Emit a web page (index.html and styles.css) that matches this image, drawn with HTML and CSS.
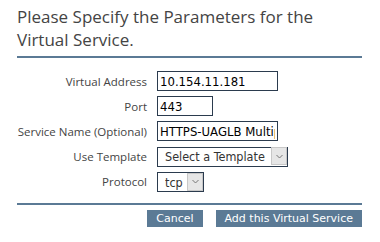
FILE: index.html
```html
<!DOCTYPE html>
<html lang="en">
<head>
    <meta charset="UTF-8">
    <title>Add Virtual Service</title>
    <link rel="stylesheet" href="styles.css">
</head>
<body>
    <div class="panel">
        <h1 class="title">Please Specify the Parameters for the Virtual Service.</h1>

        <div class="form">
            <label class="label" for="vip">Virtual Address</label>
            <input class="field field-wide" id="vip" type="text" value="10.154.11.181">

            <label class="label" for="port">Port</label>
            <input class="field field-port" id="port" type="text" value="443">

            <label class="label" for="name">Service Name (Optional)</label>
            <input class="field field-wide" id="name" type="text" value="HTTPS-UAGLB Multiple">

            <label class="label" for="tpl">Use Template</label>
            <div class="select-wrap">
                <select class="select select-template" id="tpl">
                    <option>Select a Template</option>
                </select>
                <span class="select-arrow">
                    <svg width="7" height="5" viewBox="0 0 7 5"><path d="M0.5 1 L3.5 4 L6.5 1" fill="none" stroke="#777" stroke-width="1"/></svg>
                </span>
            </div>

            <label class="label" for="proto">Protocol</label>
            <div class="select-wrap">
                <select class="select select-proto" id="proto">
                    <option>tcp</option>
                    <option>udp</option>
                </select>
                <span class="select-arrow">
                    <svg width="7" height="5" viewBox="0 0 7 5"><path d="M0.5 1 L3.5 4 L6.5 1" fill="none" stroke="#777" stroke-width="1"/></svg>
                </span>
            </div>
        </div>

        <div class="actions">
            <button class="btn">Cancel</button>
            <button class="btn">Add this Virtual Service</button>
        </div>
    </div>
</body>
</html>
```

FILE: styles.css
```css
body {
    margin: 0;
    background-color: white;
    font-family: "DejaVu Sans", Verdana, sans-serif;
}
.panel {
    padding: 5px 18px 0 17px;
}
.title {
    font-family: "Open Sans", sans-serif;
    font-size: 17px;
    font-weight: normal;
    line-height: 23px;
    color: #444;
    margin: 0;
    padding-bottom: 5px;
    border-bottom: 2px solid #5b7a95;
}
.form {
    display: grid;
    grid-template-columns: 130px auto;
    column-gap: 10px;
    row-gap: 5px;
    align-items: center;
    justify-items: start;
    padding: 13px 0 11px;
    border-bottom: 2px solid #5b7a95;
}
.label {
    justify-self: end;
    white-space: nowrap;
    font-family: "Open Sans", sans-serif;
    font-size: 11.5px;
    color: #444;
}
.field {
    box-sizing: border-box;
    height: 20px;
    border: 1px solid #2b3b4e;
    padding: 0 2px;
    font-family: "DejaVu Sans Condensed", "DejaVu Sans", sans-serif;
    font-size: 13px;
    color: black;
    outline: none;
}
.field-wide {
    width: 121px;
}
.field-port {
    width: 56px;
}
.select-wrap {
    position: relative;
    display: inline-block;
}
.select {
    box-sizing: border-box;
    height: 20px;
    -webkit-appearance: none;
    appearance: none;
    border: 1px solid #2b3b4e;
    border-radius: 0;
    background: white;
    padding: 0 0 0 7px;
    font-family: "DejaVu Sans Condensed", "DejaVu Sans", sans-serif;
    font-size: 12.5px;
    color: #333;
}
.select-template {
    width: 131px;
}
.select-proto {
    width: 47px;
}
.select-arrow {
    position: absolute;
    top: 1px;
    right: 1px;
    width: 16px;
    height: 18px;
    background: #e6e6e6;
    border: 1px solid #c8c8c8;
    box-sizing: border-box;
    display: flex;
    align-items: center;
    justify-content: center;
}
.actions {
    display: flex;
    justify-content: flex-end;
    gap: 13px;
    padding-top: 5px;
}
.btn {
    background-color: #5b7a95;
    color: white;
    border: none;
    font-family: "DejaVu Sans", Verdana, sans-serif;
    font-size: 11px;
    height: 17px;
    padding: 0 9px;
    line-height: 17px;
    cursor: pointer;
}
```
